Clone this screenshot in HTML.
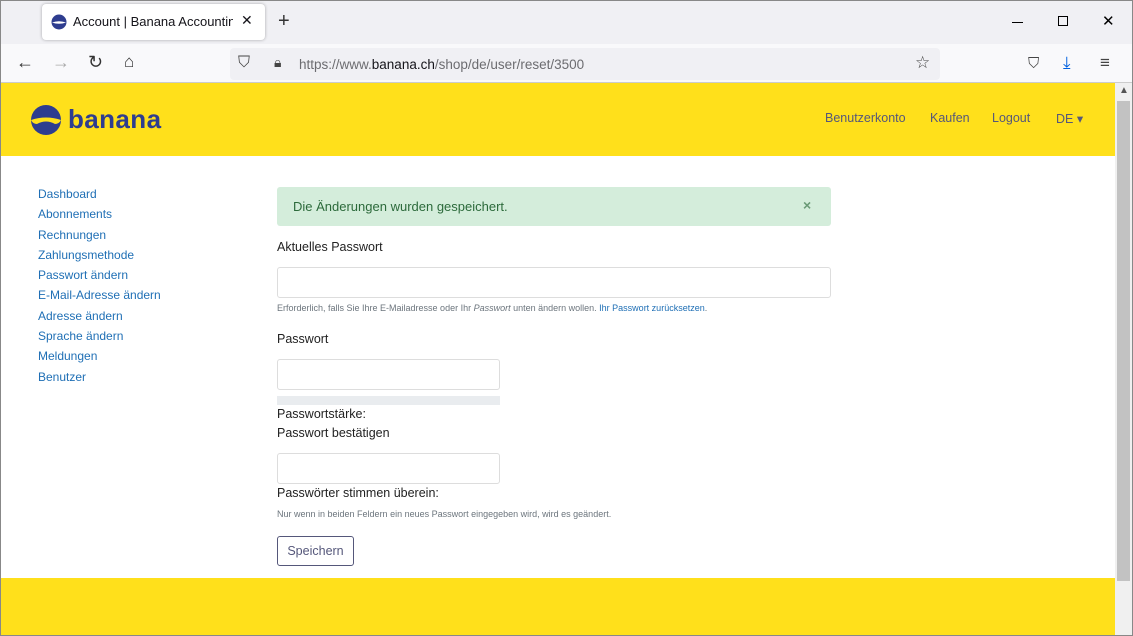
<!DOCTYPE html>
<html><head><meta charset="utf-8"><style>
*{box-sizing:border-box;margin:0;padding:0}
body{width:1133px;height:636px;overflow:hidden;font-family:"Liberation Sans",sans-serif;background:#fff;position:relative}
.frame{position:absolute;left:0;top:0;width:1133px;height:636px;border:1px solid #888;pointer-events:none;z-index:5}
.abs{position:absolute}
.tabbar{left:0;top:0;width:1133px;height:44px;background:#f0f0f4}
.tab{left:42px;top:4px;width:223px;height:36px;background:#fff;border-radius:4px;box-shadow:0 0 3px rgba(0,0,0,.3);font-size:13px;color:#15141a}
.toolbar{left:0;top:44px;width:1133px;height:39px;background:#f9f9fb;border-bottom:1px solid #ccc}
.url{left:230px;top:48px;width:710px;height:32px;background:#f0f0f4;border-radius:4px;font-size:13.5px;color:#6c6c70}
.hdr{left:0;top:83px;width:1115px;height:73px;background:#ffe01b}
.nav{font-size:12.5px;color:#55577a;top:111px}
.side a{display:block;color:#1f6fb5;font-size:12px;text-decoration:none;height:20.3px}
.alert{left:277px;top:187px;width:554px;height:39px;background:#d4eddb;border-radius:3px;color:#2c6a3b;font-size:13px;padding:12px 16px}
.lbl{font-size:12.5px;color:#222}
.inp{border:1px solid #ddd;border-radius:3px;background:#fff}
.help{font-size:9px;color:#6c757d}
.foot{left:0;top:578px;width:1115px;height:58px;background:#ffe01b}
.sb{left:1115px;top:83px;width:18px;height:553px;background:#f0f0f0}
</style></head><body>
<div class="frame"></div>
<div class="abs tabbar"></div>
<div class="abs tab"><svg class="abs" style="left:9px;top:10px" width="16" height="16" viewBox="0 0 16 16"><circle cx="8" cy="8" r="7.5" fill="#2e3d8f"/><path d="M1 8.5 Q8 6 15 8.5 Q8 11 1 8.5Z" fill="#fff"/></svg><span class="abs" style="left:31px;top:10px;white-space:nowrap;width:160px;overflow:hidden">Account | Banana Accounting S</span><span class="abs" style="left:199px;top:8px;font-size:14px">✕</span></div>
<span class="abs" style="left:278px;top:10px;font-size:20px;color:#333">+</span>
<div class="abs" style="left:1012px;top:22px;width:11px;height:1px;background:#000"></div>
<div class="abs" style="left:1058px;top:16px;width:10px;height:10px;border:1px solid #000"></div>
<span class="abs" style="left:1102px;top:12px;font-size:15px">✕</span>
<div class="abs toolbar"></div>
<span class="abs" style="left:16px;top:52px;font-size:18px;color:#333">←</span>
<span class="abs" style="left:52px;top:52px;font-size:18px;color:#aaa">→</span>
<span class="abs" style="left:88px;top:52px;font-size:18px;color:#333">↻</span>
<span class="abs" style="left:124px;top:52px;font-size:17px;color:#333">⌂</span>
<div class="abs url"><span class="abs" style="left:8px;top:6px;font-size:16px;color:#444">⛉</span><span class="abs" style="left:44px;top:6px;font-size:14px;color:#444">🔒︎</span><span class="abs" style="left:69px;top:9px">https://www.<span style="color:#15141a">banana.ch</span>/shop/de/user/reset/3500</span><span class="abs" style="left:685px;top:5px;font-size:17px;color:#444">☆</span></div>
<span class="abs" style="left:1028px;top:55px;font-size:15px;color:#444">⛉</span>
<span class="abs" style="left:1063px;top:53px;font-size:17px;color:#0060df">⤓</span>
<span class="abs" style="left:1100px;top:53px;font-size:17px;color:#444">≡</span>
<div class="abs hdr"></div>
<svg class="abs" style="left:31px;top:105px" width="30" height="30" viewBox="0 0 30 30"><circle cx="15" cy="15" r="15" fill="#2e3d8f"/><path d="M0 15 Q15 10 30 15 Q28 19 24 19 Q15 14 6 19 Q2 19 0 15Z" fill="#ffe01b"/></svg>
<span class="abs" style="left:68px;top:104px;font-size:26px;font-weight:bold;color:#2e3d8f;letter-spacing:.4px">banana</span>
<span class="abs nav" style="left:825px">Benutzerkonto</span>
<span class="abs nav" style="left:930px">Kaufen</span>
<span class="abs nav" style="left:992px">Logout</span>
<span class="abs nav" style="left:1056px">DE ▾</span>
<div class="abs sb"><span class="abs" style="left:4px;top:2px;font-size:10px;color:#555">▲</span><div class="abs" style="left:2px;top:18px;width:13px;height:480px;background:#c2c2c2"></div></div>
<div class="abs side" style="left:38px;top:187px">
<a>Dashboard</a><a>Abonnements</a><a>Rechnungen</a><a>Zahlungsmethode</a><a>Passwort ändern</a><a>E-Mail-Adresse ändern</a><a>Adresse ändern</a><a>Sprache ändern</a><a>Meldungen</a><a>Benutzer</a></div>
<div class="abs alert">Die Änderungen wurden gespeichert.<span class="abs" style="left:526px;top:10px;color:#6a9a76;font-size:14px;font-weight:bold">×</span></div>
<span class="abs lbl" style="left:277px;top:240px">Aktuelles Passwort</span>
<div class="abs inp" style="left:277px;top:267px;width:554px;height:31px"></div>
<span class="abs help" style="left:277px;top:303px">Erforderlich, falls Sie Ihre E-Mailadresse oder Ihr <i>Passwort</i> unten ändern wollen. <span style="color:#1f6fb5">Ihr Passwort zurücksetzen</span>.</span>
<span class="abs lbl" style="left:277px;top:332px">Passwort</span>
<div class="abs inp" style="left:277px;top:359px;width:223px;height:31px"></div>
<div class="abs" style="left:277px;top:396px;width:223px;height:9px;background:#e9ecef"></div>
<span class="abs lbl" style="left:277px;top:407px">Passwortstärke:</span>
<span class="abs lbl" style="left:277px;top:426px">Passwort bestätigen</span>
<div class="abs inp" style="left:277px;top:453px;width:223px;height:31px"></div>
<span class="abs lbl" style="left:277px;top:486px">Passwörter stimmen überein:</span>
<span class="abs help" style="left:277px;top:509px">Nur wenn in beiden Feldern ein neues Passwort eingegeben wird, wird es geändert.</span>
<div class="abs" style="left:277px;top:536px;width:77px;height:30px;border:1px solid #55577a;border-radius:3px;color:#55577a;font-size:12.5px;text-align:center;line-height:28px">Speichern</div>
<div class="abs foot"></div>
</body></html>
